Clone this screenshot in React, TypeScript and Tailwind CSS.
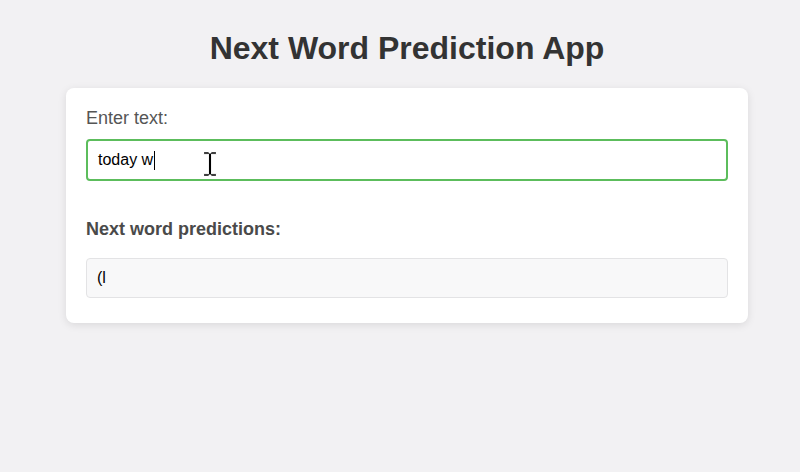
export default function App() {
  return (
    <div
      className="min-h-[472px] bg-[#f2f1f3] pt-[30px]"
      style={{ fontFamily: '"Liberation Sans", Arial, sans-serif' }}
    >
      <div className="ml-[66px] w-[682px]">
        <h1 className="mb-[21px] text-center text-[32px] font-bold leading-[37px] text-[#333]">
          Next Word Prediction App
        </h1>

        <div className="rounded-lg bg-white px-5 pt-5 pb-[25px] shadow-[0_2px_8px_rgba(0,0,0,0.1)]">
          <label className="mb-[10px] block text-[18px] leading-[21px] text-[#555]">Enter text:</label>
          <div className="relative flex h-[42px] items-center rounded-[4px] border-2 border-[#5cbd5c] px-[10px] text-[16px] text-black">
            <span>today w</span>
            <span className="ml-px inline-block h-[19px] w-px bg-black" />
            <svg
              className="absolute left-[113px] top-[9px]"
              width="18"
              height="28"
              viewBox="0 0 16 26"
            >
              <path
                d="M2 1.5h4.5l1.5 1.5 1.5-1.5H14v2.5h-4.5v18H14v2.5H9.5L8 23l-1.5 1.5H2V22h4.5V4H2z"
                fill="#000"
                stroke="#fff"
                strokeWidth="1"
              />
            </svg>
          </div>

          <h3 className="mt-[38px] mb-[18px] text-[18px] font-bold leading-[21px] text-[#4a4a4a]">
            Next word predictions:
          </h3>
          <div className="flex h-[40px] items-center rounded-[4px] border border-[#e3e3e5] bg-[#f8f8f9] px-[10px] text-[16px] text-black">
            (l
          </div>
        </div>
      </div>
    </div>
  );
}
